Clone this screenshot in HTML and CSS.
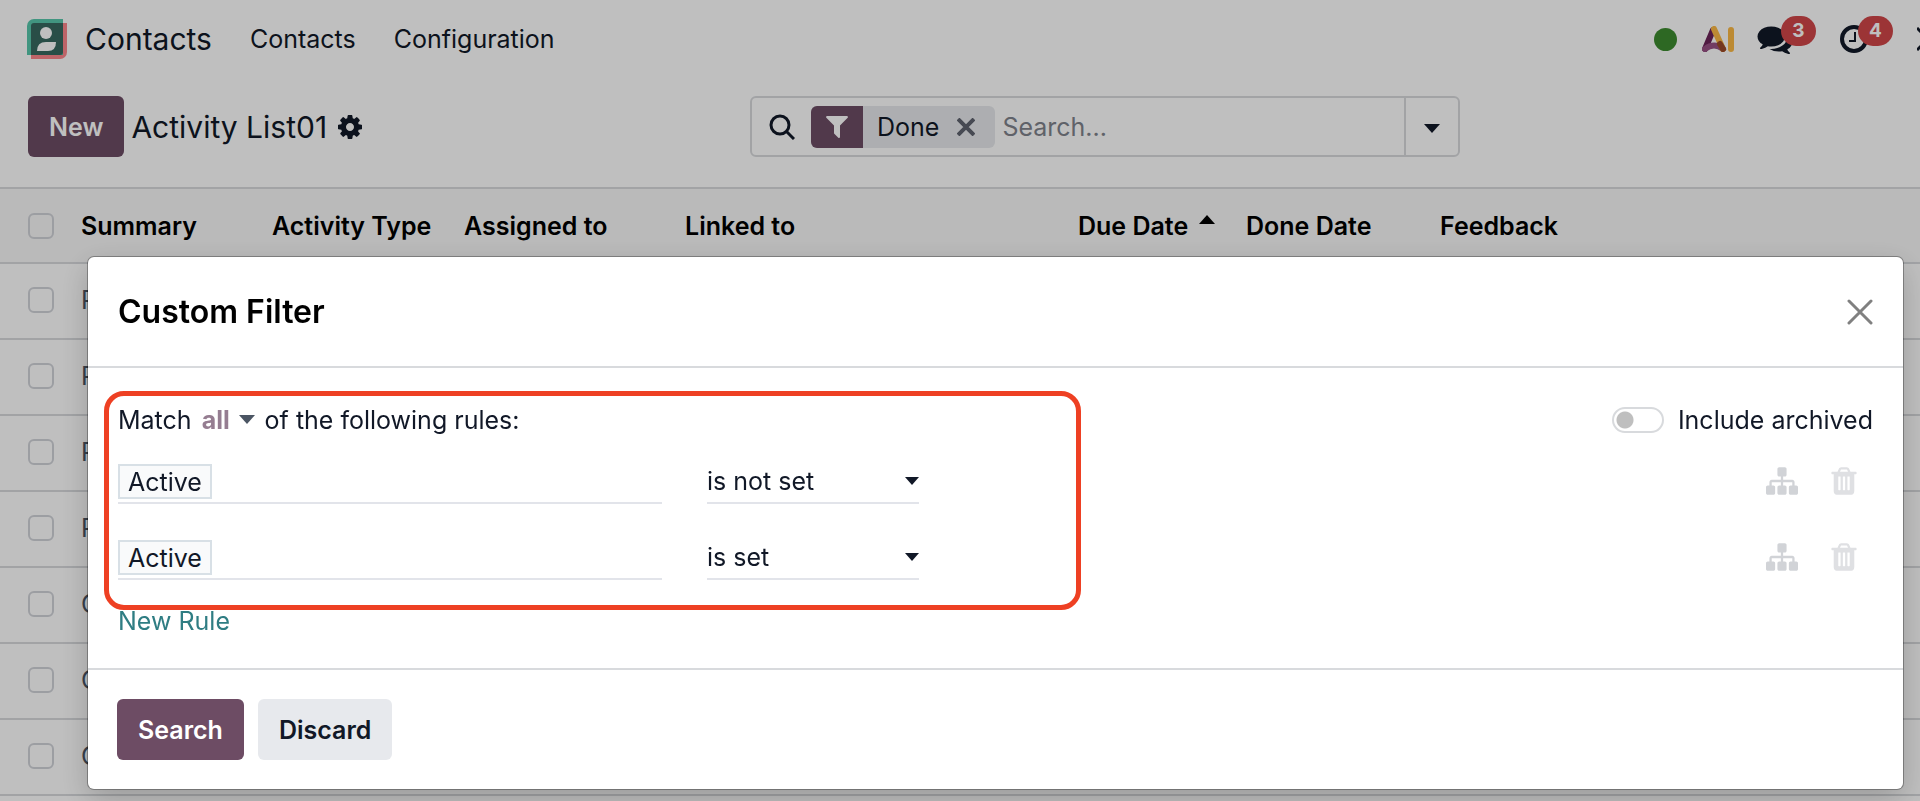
FILE: index.html
```html
<!DOCTYPE html>
<html lang="en">
<head>
    <meta charset="UTF-8">
    <meta name="viewport" content="width=device-width, initial-scale=1.0">
    <title>Contacts - Activity List01</title>
    <link rel="stylesheet" href="styles.css">
</head>
<body>
    <!-- shared icons -->
    <svg class="sprite" aria-hidden="true">
        <symbol id="i-sitemap" viewBox="0 0 1792 1792">
            <path d="M1792 1248v320q0 40-28 68t-68 28h-320q-40 0-68-28t-28-68v-320q0-40 28-68t68-28h96v-192h-512v192h96q40 0 68 28t28 68v320q0 40-28 68t-68 28h-320q-40 0-68-28t-28-68v-320q0-40 28-68t68-28h96v-192h-512v192h96q40 0 68 28t28 68v320q0 40-28 68t-68 28h-320q-40 0-68-28t-28-68v-320q0-40 28-68t68-28h96v-192q0-52 38-90t90-38h512v-192h-96q-40 0-68-28t-28-68v-320q0-40 28-68t68-28h320q40 0 68 28t28 68v320q0 40-28 68t-68 28h-96v192h512q52 0 90 38t38 90v192h96q40 0 68 28t28 68z"/>
        </symbol>
        <symbol id="i-trash" viewBox="0 0 1792 1792">
            <path d="M704 1376v-704q0-14-9-23t-23-9h-64q-14 0-23 9t-9 23v704q0 14 9 23t23 9h64q14 0 23-9t9-23zm256 0v-704q0-14-9-23t-23-9h-64q-14 0-23 9t-9 23v704q0 14 9 23t23 9h64q14 0 23-9t9-23zm256 0v-704q0-14-9-23t-23-9h-64q-14 0-23 9t-9 23v704q0 14 9 23t23 9h64q14 0 23-9t9-23zm-544-992h448l-48-117q-7-9-17-11h-317q-10 2-17 11zm928 32v64q0 14-9 23t-23 9h-96v948q0 83-47 143.500t-113 60.500h-832q-66 0-113-58.500t-47-141.500v-952h-96q-14 0-23-9t-9-23v-64q0-14 9-23t23-9h309l70-167q15-37 54-63t79-26h320q40 0 79 26t54 63l70 167h309q14 0 23 9t9 23z"/>
        </symbol>
    </svg>

    <header class="navbar">
        <svg class="app-icon" viewBox="0 0 40 40">
            <path d="M4 4h36v29a7 7 0 0 1-7 7H4z" fill="#fc868b"/>
            <path d="M7 0h29v36H0V7a7 7 0 0 1 7-7z" fill="#57c7ab"/>
            <path d="M7 4h29v29a3 3 0 0 1-3 3H4V7a3 3 0 0 1 3-3z" fill="#37685f"/>
            <circle cx="19" cy="14" r="6" fill="#fff"/>
            <path d="M10 32q0-9 9-9h10q0 9-8 9z" fill="#fff"/>
        </svg>
        <a href="#" class="brand">Contacts</a>
        <nav class="menu">
            <a href="#">Contacts</a>
            <a href="#">Configuration</a>
        </nav>
        <div class="systray">
            <span class="status-dot"></span>
            <button class="tray-item ai" aria-label="AI">
                <svg viewBox="0 0 32 26" fill="none" stroke-width="6" stroke-linecap="round">
                    <path d="M3 23 11 4" stroke="#6b2358"/>
                    <path d="M3 23q9-7 18 0" stroke="#985184"/>
                    <path d="M12 3l9 20" stroke="#fbb945"/>
                    <path d="M18 18l3 5" stroke="#9b4a2a"/>
                    <path d="M29 4v19" stroke="#fbb945"/>
                </svg>
            </button>
            <button class="tray-item" aria-label="Messages">
                <svg viewBox="0 128 1792 1536" width="36" height="30" fill="#111827">
                    <path d="M1408 768q0 139-94 257t-256.500 186.500-353.500 68.500q-86 0-176-16-124 88-278 128-36 9-86 16h-3q-11 0-20.500-8t-11.500-21q-1-3-1-6.500t.5-6.500 2-6l2.500-5 3.500-5.500 4-5 4.500-5 4-4.500q5-6 23-25t26-29.500 22.500-29 25-38.500 20.500-44q-124-72-195-177t-71-224q0-139 94-257t256.500-186.500 353.500-68.500 353.500 68.500 256.500 186.500 94 257zm384 256q0 120-71 224.500t-195 176.500q10 24 20.500 44t25 38.500 22.500 29 26 29.500 23 25q1 1 4 4.500t4.500 5 4 5 3.500 5.500l2.500 5 2 6 .5 6.500-1 6.500q-3 14-13 22t-22 7q-50-7-86-16-154-40-278-128-90 16-176 16-271 0-472-132 58 4 88 4 161 0 309-45t264-129q125-92 192-212t67-254q0-77-23-152 129 71 204 178t75 230z"/>
                </svg>
                <span class="badge">3</span>
            </button>
            <button class="tray-item activities" aria-label="Activities">
                <svg viewBox="0 0 30 30" width="30" height="30" fill="none" stroke="#111827">
                    <circle cx="15" cy="15" r="12" stroke-width="4"/>
                    <path d="M16 8v9h-6" stroke-width="2"/>
                </svg>
                <span class="badge">4</span>
            </button>
            <button class="tray-item tools" aria-label="Tools">
                <svg viewBox="0 0 24 24" width="24" height="24" fill="none" stroke="#111827" stroke-width="3">
                    <path d="M0 1l20 20M0 23 20 3"/>
                </svg>
            </button>
        </div>
    </header>

    <div class="control-panel">
        <div class="breadcrumb">
            <button class="btn btn-primary">New</button>
            <span class="view-title">Activity List01</span>
            <button class="gear" aria-label="Actions">
                <svg viewBox="128 128 1536 1536" width="24" height="24" fill="#111827">
                    <path d="M1152 896q0-106-75-181t-181-75-181 75-75 181 75 181 181 75 181-75 75-181zm512-109v222q0 12-8 23t-20 13l-185 28q-19 54-39 91 35 50 107 138 10 12 10 25t-9 23q-27 37-99 108t-94 71q-12 0-26-9l-138-108q-44 23-91 38-16 136-29 186-7 28-36 28h-222q-14 0-24.500-8.500t-11.500-21.500l-28-184q-49-16-90-37l-141 107q-10 9-25 9-14 0-25-11-126-114-165-168-7-10-7-23 0-12 8-23 15-21 51-66.500t54-70.500q-27-50-41-99l-183-27q-13-2-21-12.500t-8-23.500v-222q0-12 8-23t19-13l186-28q14-46 39-92-40-57-107-138-10-12-10-24 0-10 9-23 26-36 98.500-107.500t94.500-71.500q13 0 26 10l138 107q44-23 91-38 16-136 29-186 7-28 36-28h222q14 0 24.500 8.500t11.500 21.500l28 184q49 16 90 37l142-107q9-9 24-9 13 0 25 10 129 119 165 170 7 8 7 22 0 12-8 23-15 21-51 66.500t-54 70.500q26 50 41 98l183 28q13 2 21 12.500t8 23.500z"/>
                </svg>
            </button>
        </div>
        <div class="searchbox">
            <svg class="magnifier" viewBox="0 0 26 26" fill="none" stroke="#111827" stroke-width="3">
                <circle cx="11" cy="11" r="9"/>
                <path d="M17 17l8 8"/>
            </svg>
            <div class="facet">
                <span class="facet-icon">
                    <svg viewBox="190 256 1412 1408" width="22" height="22" fill="#fff">
                        <path d="M1595 295q17 41-14 70l-493 493v742q0 42-39 59-13 5-25 5-27 0-45-19l-256-256q-19-19-19-45v-486l-493-493q-31-29-14-70 17-39 59-39h1280q42 0 59 39z"/>
                    </svg>
                </span>
                <span class="facet-label">Done</span>
                <button class="facet-remove" aria-label="Remove">
                    <svg viewBox="0 0 18 18" width="18" height="18" stroke="#5f636f" stroke-width="4">
                        <path d="M1 1l16 16M17 1 1 17"/>
                    </svg>
                </button>
            </div>
            <input type="text" placeholder="Search..." aria-label="Search">
            <button class="search-toggle" aria-label="Toggle search panel"><span class="caret"></span></button>
        </div>
    </div>

    <table class="list">
        <colgroup>
            <col class="c-check"><col class="c-summary"><col class="c-type"><col class="c-user">
            <col class="c-linked"><col class="c-due"><col class="c-done"><col>
        </colgroup>
        <thead>
            <tr>
                <th><input type="checkbox" aria-label="Select all"></th>
                <th>Summary</th>
                <th>Activity Type</th>
                <th>Assigned to</th>
                <th>Linked to</th>
                <th>Due Date <span class="caret caret-up"></span></th>
                <th>Done Date</th>
                <th>Feedback</th>
            </tr>
        </thead>
        <tbody>
            <tr><td><input type="checkbox" aria-label="Select row"></td><td colspan="7">P</td></tr>
            <tr><td><input type="checkbox" aria-label="Select row"></td><td colspan="7">P</td></tr>
            <tr><td><input type="checkbox" aria-label="Select row"></td><td colspan="7">P</td></tr>
            <tr><td><input type="checkbox" aria-label="Select row"></td><td colspan="7">P</td></tr>
            <tr><td><input type="checkbox" aria-label="Select row"></td><td colspan="7">C</td></tr>
            <tr><td><input type="checkbox" aria-label="Select row"></td><td colspan="7">C</td></tr>
            <tr><td><input type="checkbox" aria-label="Select row"></td><td colspan="7">C</td></tr>
        </tbody>
    </table>

    <div class="backdrop">
        <div class="dialog" role="dialog" aria-labelledby="dialogTitle">
            <div class="dialog-header">
                <h4 id="dialogTitle">Custom Filter</h4>
                <button class="close" aria-label="Close">
                    <svg viewBox="0 0 26 26" width="26" height="26" stroke="#808080" stroke-width="3" stroke-linecap="round">
                        <path d="M2 2l22 22M24 2 2 24"/>
                    </svg>
                </button>
            </div>
            <div class="dialog-body">
                <div class="match">
                    <span>Match</span>
                    <button class="connector">all <span class="caret"></span></button>
                    <span>of the following rules:</span>
                    <label class="switch"><input type="checkbox">Include archived</label>
                </div>
                <div class="rule">
                    <div class="field"><span class="tag">Active</span></div>
                    <div class="operator">
                        <select aria-label="Operator">
                            <option>is not set</option>
                        </select>
                        <span class="caret"></span>
                    </div>
                    <div class="rule-actions">
                        <button aria-label="Add branch"><svg class="sitemap"><use href="#i-sitemap"/></svg></button>
                        <button aria-label="Delete rule"><svg class="trash"><use href="#i-trash"/></svg></button>
                    </div>
                </div>
                <div class="rule">
                    <div class="field"><span class="tag">Active</span></div>
                    <div class="operator">
                        <select aria-label="Operator">
                            <option>is set</option>
                        </select>
                        <span class="caret"></span>
                    </div>
                    <div class="rule-actions">
                        <button aria-label="Add branch"><svg class="sitemap"><use href="#i-sitemap"/></svg></button>
                        <button aria-label="Delete rule"><svg class="trash"><use href="#i-trash"/></svg></button>
                    </div>
                </div>
                <a href="#" class="new-rule">New Rule</a>
                <div class="highlight"></div>
            </div>
            <div class="dialog-footer">
                <button class="btn btn-primary">Search</button>
                <button class="btn btn-secondary">Discard</button>
            </div>
        </div>
    </div>
</body>
</html>
```
FILE: styles.css
```css
* {
    box-sizing: border-box;
}
body {
    margin: 0;
    font-family: Inter, "Liberation Sans", sans-serif;
    font-size: 25px;
    line-height: 36px;
    color: #111827;
    background-color: #fff;
    overflow: hidden;
}
a {
    color: inherit;
    text-decoration: none;
}
button {
    padding: 0;
    border: 0;
    background: none;
    font: inherit;
    color: inherit;
}
svg {
    display: block;
    flex: none;
}
.sprite {
    position: absolute;
    width: 0;
    height: 0;
}
.caret {
    display: inline-block;
    border: 8px solid transparent;
    border-top: 9px solid currentColor;
    border-bottom: 0;
}
.caret-up {
    border-top: 0;
    border-bottom: 9px solid currentColor;
    margin-left: 4px;
    vertical-align: 11px;
}

/* top bar */
.navbar {
    display: flex;
    align-items: center;
    height: 78px;
    padding-left: 27px;
}
.app-icon {
    width: 40px;
    height: 40px;
}
.brand {
    margin-left: 18px;
    font-size: 30px;
}
.menu {
    display: flex;
    gap: 38px;
    margin-left: 38px;
}
.systray {
    display: flex;
    align-items: center;
    margin-left: auto;
}
.status-dot {
    width: 23px;
    height: 23px;
    margin-right: 25px;
    border-radius: 50%;
    background-color: #3d8b2f;
}
.tray-item {
    position: relative;
    margin-right: 46px;
}
.ai {
    width: 32px;
    margin-right: 23px;
}
.badge {
    position: absolute;
    left: 24px;
    bottom: 8px;
    width: 35px;
    height: 30px;
    border-radius: 15px;
    background-color: #d04649;
    color: #fff;
    font-size: 19px;
    font-weight: 700;
    line-height: 30px;
    text-align: center;
}
.activities {
    margin-right: 48px;
}
.activities .badge {
    left: 19px;
}
.tools {
    width: 3px;
    margin-right: 0;
    overflow: hidden;
}

/* control panel */
.control-panel {
    display: grid;
    grid-template-columns: 722px 710px 1fr;
    align-items: center;
    height: 111px;
    padding: 0 28px 12px;
    border-bottom: 2px solid #d8dadd;
}
.breadcrumb {
    display: flex;
    align-items: center;
}
.btn {
    height: 61px;
    padding: 0 21px;
    border-radius: 6px;
    font-weight: 600;
}
.btn-primary {
    background-color: #6d4c64;
    color: #fff;
}
.btn-secondary {
    background-color: #e7e9ed;
}
.view-title {
    margin: 0 11px 0 7px;
    font-size: 30px;
}
.searchbox {
    display: flex;
    align-items: center;
    height: 61px;
    border: 2px solid #d8dadd;
    border-radius: 6px;
}
.magnifier {
    width: 26px;
    height: 26px;
    margin: 0 16px 0 17px;
}
.facet {
    display: flex;
    align-items: center;
    height: 42px;
    border-radius: 6px;
    background-color: #e7e9ed;
    overflow: hidden;
}
.facet-icon {
    display: flex;
    align-items: center;
    justify-content: center;
    width: 52px;
    height: 100%;
    background-color: #6d4c64;
}
.facet-label {
    margin: 0 18px 0 14px;
}
.facet-remove {
    margin-right: 20px;
}
.searchbox input {
    flex: 1;
    min-width: 0;
    padding: 0 7px;
    border: 0;
    background: none;
    font: inherit;
}
.searchbox input::placeholder {
    color: #7f838c;
}
.search-toggle {
    width: 54px;
    height: 100%;
    border-left: 2px solid #d8dadd;
}
.search-toggle .caret {
    vertical-align: middle;
}

/* activity list */
.list {
    width: 100%;
    table-layout: fixed;
    border-collapse: collapse;
}
.c-check { width: 81px; }
.c-summary { width: 191px; }
.c-type { width: 192px; }
.c-user { width: 221px; }
.c-linked { width: 393px; }
.c-due { width: 168px; }
.c-done { width: 194px; }
.list th,
.list td {
    height: 76px;
    padding: 0;
    border-bottom: 2px solid #d8dadd;
    text-align: left;
    white-space: nowrap;
}
.list th {
    height: 74px;
    background-color: #f8f8f8;
    color: #000;
    font-weight: 600;
}
.list td {
    padding-bottom: 2px;
    color: #4b5563;
}
.list input {
    display: block;
    appearance: none;
    width: 26px;
    height: 26px;
    margin: 0 0 0 28px;
    border: 2px solid #d1d3d9;
    border-radius: 6px;
}

/* dialog */
.backdrop {
    position: fixed;
    inset: 0;
    padding: 257px 17px 0 88px;
    background-color: rgba(0, 0, 0, 0.25);
}
.dialog {
    border-radius: 6px;
    background-color: #fff;
    box-shadow: 0 0 0 1px rgba(0, 0, 0, 0.3), 0 10px 30px rgba(0, 0, 0, 0.2);
}
.dialog-header {
    display: flex;
    align-items: center;
    justify-content: space-between;
    height: 111px;
    padding: 0 30px;
    border-bottom: 2px solid #d8dadd;
}
.dialog-header h4 {
    margin: 0;
    color: #000;
    font-size: 32px;
    font-weight: 600;
}
.dialog-body {
    position: relative;
    padding: 34px 30px 29px;
}
.match {
    display: flex;
    align-items: center;
    gap: 10px;
    height: 36px;
}
.connector {
    color: #957d91;
    font-weight: 700;
}
.connector .caret {
    margin-left: 3px;
    color: #4b5563;
    vertical-align: 5px;
}
.switch {
    display: flex;
    align-items: center;
    gap: 14px;
    margin-left: auto;
}
.switch input {
    appearance: none;
    width: 52px;
    height: 26px;
    margin: 0;
    border: 2px solid #d8dadd;
    border-radius: 13px;
    background: radial-gradient(circle at 11px 11px, #bfbfbf 8px, transparent 9px);
}
.rule {
    display: flex;
    align-items: flex-start;
    height: 76px;
    padding-top: 22px;
}
.field,
.operator {
    display: flex;
    align-items: center;
    height: 44px;
    border-bottom: 2px solid #e2e4ea;
}
.field {
    width: 544px;
    margin-right: 45px;
}
.tag {
    height: 35px;
    padding: 0 8px;
    border: 2px solid #d8e0e6;
    background-color: #f9fafb;
    line-height: 32px;
}
.operator {
    position: relative;
    width: 212px;
}
.operator select {
    appearance: none;
    width: 100%;
    padding: 0;
    border: 0;
    background: none;
    font: inherit;
    color: inherit;
}
.operator .caret {
    position: absolute;
    right: 0;
    border-width: 8px 7px 0;
}
.rule-actions {
    display: flex;
    align-items: center;
    gap: 30px;
    height: 42px;
    margin: 0 13px 0 auto;
}
.rule-actions svg {
    width: 32px;
    height: 32px;
}
.sitemap {
    fill: #d1d3d7;
}
.trash {
    fill: #dfe0e3;
}
.new-rule {
    display: block;
    width: max-content;
    margin-top: 13px;
    color: #2f7d83;
}
.highlight {
    position: absolute;
    left: 16px;
    top: 23px;
    width: 977px;
    height: 219px;
    border: 5px solid #ee4023;
    border-radius: 20px;
    pointer-events: none;
}
.dialog-footer {
    display: flex;
    gap: 14px;
    padding: 29px;
    border-top: 2px solid #d8dadd;
}
```
